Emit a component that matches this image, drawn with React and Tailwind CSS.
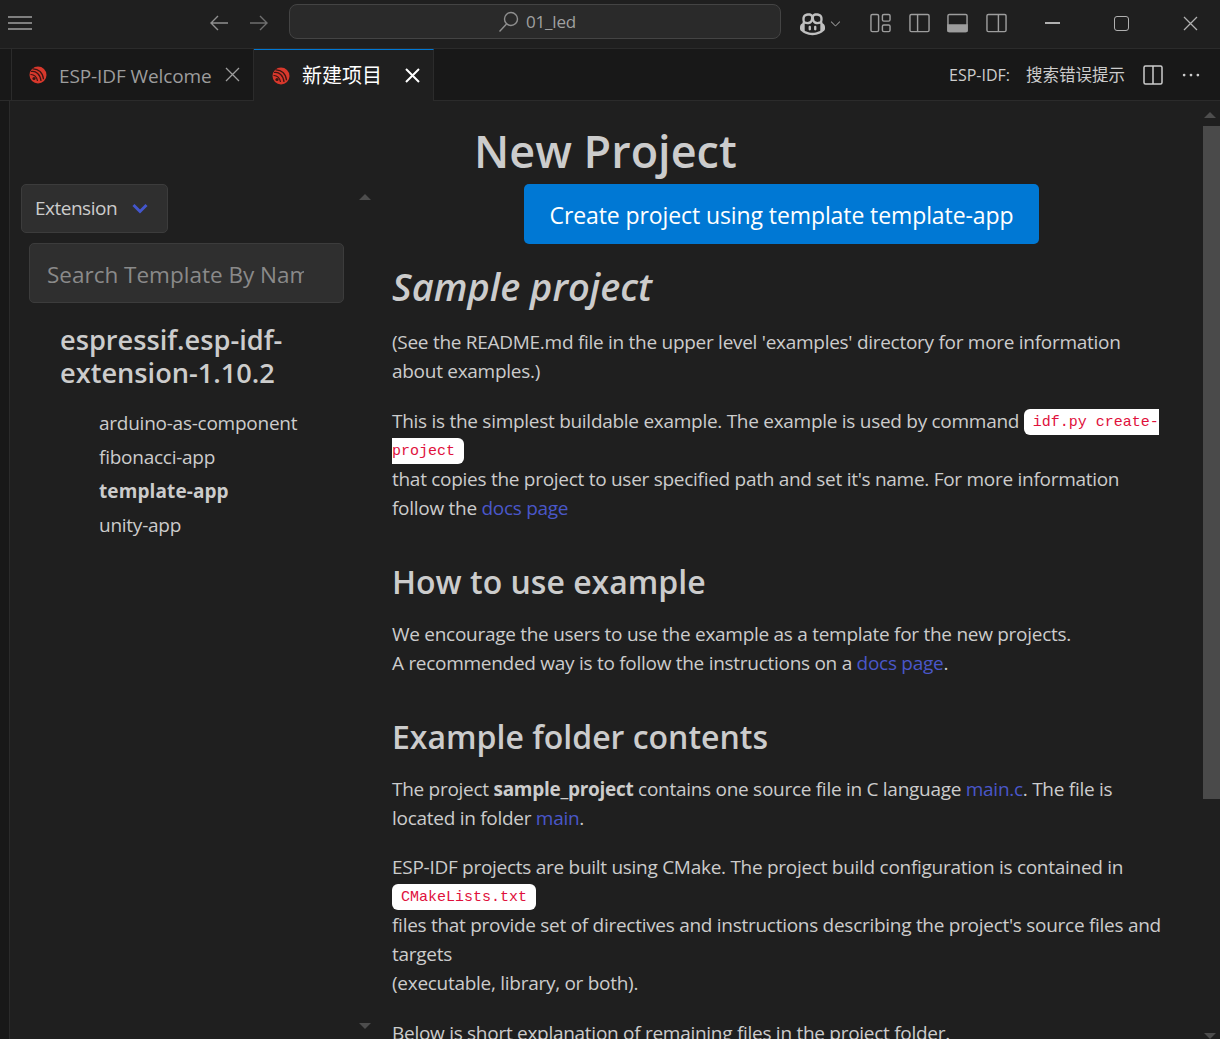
import React from 'react';
import { VscCopilot, VscChevronDown, VscEllipsis } from 'react-icons/vsc';

const sans = '[font-family:"Open_Sans","Noto_Sans_CJK_SC",sans-serif]';

const EspLogo = () => (
  <svg width="18" height="18" viewBox="0 0 18 18" className="shrink-0">
    <circle cx="9" cy="9" r="8.500" fill="#d8382c" />
    <g fill="none" stroke="#3a1512" strokeWidth="1.200">
      <path d="M2 5.500c5-1 9.500 3 10 9.500" />
      <path d="M3.500 2.800c6-.3 10.500 4 11 10.500" />
      <path d="M1.500 8.500c3.500-.3 6.500 2.500 7 6.500" />
    </g>
    <circle cx="5" cy="12.500" r="1.600" fill="#3a1512" />
  </svg>
);

const LayoutIcon = ({ kind }) => (
  <svg width="21" height="20" viewBox="0 0 22 20" fill="none" stroke="#9d9d9d" strokeWidth="1.500" className="shrink-0">
    {kind === 'custom' ? (
      <>
        <rect x="1" y="1" width="8" height="18" rx="1.500" />
        <rect x="13" y="1" width="8" height="7" rx="1.500" />
        <rect x="13" y="12" width="8" height="7" rx="1.500" />
      </>
    ) : (
      <rect x="1" y="1" width="20" height="18" rx="1.500" />
    )}
    {kind === 'left' && <path d="M9 1v18" />}
    {kind === 'right' && <path d="M13 1v18" />}
    {kind === 'bottom' && <path d="M1 12h20v6a1 1 0 0 1-1 1H2a1 1 0 0 1-1-1z" fill="#9d9d9d" />}
  </svg>
);

const CloseIcon = ({ size = 15, color = '#9d9d9d', width = 1.300 }) => (
  <svg width={size} height={size} viewBox="0 0 15 15" stroke={color} strokeWidth={width} className="shrink-0">
    <path d="M1 1l13 13M14 1L1 14" />
  </svg>
);

const TitleBar = () => (
  <div className="flex h-[49px] items-center border-b border-[#2b2b2b] bg-[#1f1f1f] pb-[2px]">
    <svg width="24" height="14" viewBox="0 0 24 14" stroke="#a0a0a0" strokeWidth="1.500" className="ml-[8px] shrink-0">
      <path d="M0 1h24M0 7h24M0 13h24" />
    </svg>
    <svg width="19" height="16" viewBox="0 0 19 16" fill="none" stroke="#909090" strokeWidth="1.400" className="ml-[178px] shrink-0">
      <path d="M18 8H1M8 1L1 8l7 7" />
    </svg>
    <svg width="19" height="16" viewBox="0 0 19 16" fill="none" stroke="#6f6f6f" strokeWidth="1.400" className="ml-[20px] shrink-0">
      <path d="M1 8h17M11 1l7 7-7 7" />
    </svg>
    <div className="ml-[21px] mt-[4px] flex h-[35px] w-[492px] items-center justify-center self-start rounded-[8px] border border-[#444444] bg-[#2a2a2a] pl-[4px] text-[17px] tracking-[-0.2px] text-[#a0a0a0]">
      <svg width="21" height="22" viewBox="0 0 21 22" fill="none" stroke="#8f8f8f" strokeWidth="1.400" className="mr-[7px] shrink-0">
        <circle cx="13" cy="8" r="6.500" />
        <path d="M8.500 13L1.500 20.500" />
      </svg>
      01_led
    </div>
    <VscCopilot className="ml-[19px] shrink-0 text-[#c0c0c0]" size={25} />
    <VscChevronDown className="ml-[3px] shrink-0 text-[#9d9d9d]" size={15} />
    <div className="ml-[27px] flex gap-[17.5px]">
      <LayoutIcon kind="custom" />
      <LayoutIcon kind="left" />
      <LayoutIcon kind="bottom" />
      <LayoutIcon kind="right" />
    </div>
    <div className="ml-[38px] h-[2px] w-[15px] bg-[#b0b0b0]" />
    <div className="ml-[54px] h-[15px] w-[15px] rounded-[3px] border-[1.500px] border-[#b0b0b0]" />
    <div className="ml-[54px]">
      <CloseIcon size={15} color="#b0b0b0" />
    </div>
  </div>
);

const TabBar = () => (
  <div className="flex h-[52px] items-stretch border-b border-[#2b2b2b] bg-[#181818] pl-[11px] text-[20px]">
    <div className="flex w-[243px] items-center border-l border-r border-[#2b2b2b] bg-[#181818] pl-[17px] text-[#9d9d9d]">
      <EspLogo />
      <span className="ml-[12px] mt-[3px] whitespace-nowrap text-[19px] tracking-[-0.1px]">ESP-IDF Welcome</span>
      <span className="ml-[13px]"><CloseIcon /></span>
    </div>
    <div className="-mb-px flex w-[180px] items-center border-r border-t border-r-[#2b2b2b] border-t-[#0078d4] bg-[#1f1f1f] pl-[18px] text-white">
      <EspLogo />
      <span className="ml-[12px] mt-[1px] whitespace-nowrap">新建项目</span>
      <span className="ml-[23px]"><CloseIcon color="#ffffff" width={2} /></span>
    </div>
    <div className="ml-auto flex items-center pt-[1px] text-[16px] text-[#cccccc]">
      <span>ESP-IDF:</span>
      <span className="ml-[16px] text-[16.500px]">搜索错误提示</span>
      <svg width="20" height="20" viewBox="0 0 20 20" fill="none" stroke="#cccccc" strokeWidth="1.500" className="ml-[18px]">
        <rect x="1" y="1" width="18" height="18" rx="1.500" />
        <path d="M10 1v18" />
      </svg>
      <VscEllipsis className="ml-[17px] mr-[18px] text-[#cccccc]" size={22} />
    </div>
  </div>
);

const Code = ({ children }) => (
  <code className="rounded-[6px] bg-white px-[9px] py-[4.500px] align-[2.500px] font-['Liberation_Mono',monospace] text-[15px] leading-none tracking-normal text-[#e0103c] [box-decoration-break:slice]">
    {children}
  </code>
);

const DocLink = ({ children }) => <span className="text-[#4a57c9]">{children}</span>;

const Sidebar = () => (
  <div className="w-[382px] shrink-0 pl-[11px] pt-[83px]">
    <div className="flex h-[49px] w-[147px] items-center rounded-[5px] border border-[#3c3c3c] bg-[#2f2f2f] pl-[13px] text-[19px] tracking-[-0.5px] text-[#cccccc]">
      Extension
      <svg width="16" height="11" viewBox="0 0 16 11" fill="none" stroke="#4356cc" strokeWidth="3" className="ml-[15px]">
        <path d="M1.500 2l6.500 6.500L14.500 2" />
      </svg>
    </div>
    <input
      readOnly
      placeholder="Search Template By Name"
      className="ml-[8px] mt-[10px] block h-[60px] w-[315px] rounded-[5px] border border-[#3c3c3c] bg-[#2f2f2f] pl-[17px] pr-[39px] pt-[2px] text-[22.500px] outline-none placeholder:text-[#8a8a8a]"
    />
    <h3 className="ml-[39px] mt-[20px] w-[270px] text-[27.200px] font-semibold leading-[33px] text-[#cccccc]">
      espressif.esp-idf-extension-1.10.2
    </h3>
    <ul className="ml-[78px] mt-[17px] text-[19px] leading-[34px] tracking-[-0.25px] text-[#cccccc]">
      <li>arduino-as-component</li>
      <li>fibonacci-app</li>
      <li className="font-bold tracking-[0.1px]">template-app</li>
      <li>unity-app</li>
    </ul>
  </div>
);

const Readme = () => (
  <div className="w-[779px] shrink-0 pt-[83px] text-[19px] leading-[29px] tracking-[-0.28px] text-[#cccccc]">
    <div className="flex justify-center">
      <div className="flex h-[60px] w-[515px] items-center justify-center rounded-[5px] bg-[#0078d4] pt-[2px] text-[23px] tracking-[-0.1px] text-white">
        Create project using template template-app
      </div>
    </div>
    <h1 className="mt-[15px] text-[38px] font-semibold italic leading-[54px] tracking-normal">Sample project</h1>
    <p className="mt-[15px]">
      (See the README.md file in the upper level 'examples' directory for more information about examples.)
    </p>
    <p className="mt-[21px]">
      This is the simplest buildable example. The example is used by command <Code>idf.py create-project</Code>
      <br />
      that copies the project to user specified path and set it's name. For more information follow the{' '}
      <DocLink>docs page</DocLink>
    </p>
    <h2 className="mt-[35px] text-[32px] font-semibold leading-[48px] tracking-normal">How to use example</h2>
    <p className="mt-[14px]">
      We encourage the users to use the example as a template for the new projects.
      <br />
      A recommended way is to follow the instructions on a <DocLink>docs page</DocLink>.
    </p>
    <h2 className="mt-[35px] text-[32px] font-semibold leading-[48px] tracking-normal">Example folder contents</h2>
    <p className="mt-[14px]">
      The project <strong className="font-bold">sample_project</strong> contains one source file in C language{' '}
      <DocLink>main.c</DocLink>. The file is located in folder <DocLink>main</DocLink>.
    </p>
    <p className="mt-[20px]">
      ESP-IDF projects are built using CMake. The project build configuration is contained in <Code>CMakeLists.txt</Code>
      <br />
      files that provide set of directives and instructions describing the project's source files and targets
      <br />
      (executable, library, or both).
    </p>
    <p className="mt-[21px] whitespace-nowrap">Below is short explanation of remaining files in the project folder.</p>
  </div>
);

export default function App() {
  return (
    <div className={`h-[1039px] w-[1220px] overflow-hidden bg-[#1f1f1f] ${sans}`}>
      <TitleBar />
      <TabBar />
      <div className="relative flex h-[938px] overflow-hidden">
        <div className="w-[10px] shrink-0 border-r border-[#2b2b2b] bg-[#181818]" />
        <div className="relative flex-1">
          <h1 className="absolute left-[464px] top-[20px] text-[45px] font-semibold leading-[60px] text-[#cccccc]">New Project</h1>
          <div className="flex">
            <Sidebar />
            <Readme />
          </div>
        </div>
        <div className="absolute left-[359px] top-[93px] h-0 w-0 border-x-[6px] border-b-[6px] border-x-transparent border-b-[#4d4d4d]" />
        <div className="absolute left-[359px] top-[922px] h-0 w-0 border-x-[6px] border-t-[6px] border-x-transparent border-t-[#4d4d4d]" />
        <div className="absolute right-[4px] top-[11px] h-0 w-0 border-x-[6px] border-b-[6px] border-x-transparent border-b-[#4d4d4d]" />
        <div className="absolute right-0 top-[25px] h-[673px] w-[17px] bg-[#4a4a4a]" />
        <div className="absolute bottom-0 right-[4px] h-0 w-0 border-x-[6px] border-t-[6px] border-x-transparent border-t-[#4d4d4d]" />
      </div>
    </div>
  );
}
